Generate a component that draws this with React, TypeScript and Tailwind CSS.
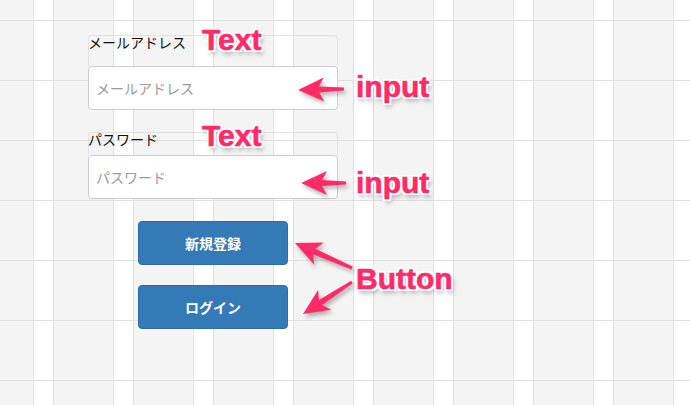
import React from "react";

type Pt = [number, number];

function dart(tail: Pt, tip: Pt, headLen = 26, headHalf = 12, neck = 3, tailHalf = 1.5): string {
  const dx = tail[0] - tip[0];
  const dy = tail[1] - tip[1];
  const len = Math.hypot(dx, dy);
  const ux = dx / len;
  const uy = dy / len;
  const nx = -uy;
  const ny = ux;
  const p = (a: number, b: number): string =>
    `${(tip[0] + ux * a + nx * b).toFixed(1)},${(tip[1] + uy * a + ny * b).toFixed(1)}`;
  return [
    p(0, 0),
    p(headLen, headHalf),
    p(headLen - 5, neck),
    p(len, tailHalf),
    p(len, -tailHalf),
    p(headLen - 5, -neck),
    p(headLen, -headHalf),
  ].join(" ");
}

const arrows: { tail: Pt; tip: Pt }[] = [
  { tail: [344, 89], tip: [298, 90] },
  { tail: [346, 183], tip: [301, 183] },
  { tail: [352, 268], tip: [295, 243] },
  { tail: [352, 282], tip: [303, 314] },
];

const annoCls =
  "absolute font-bold text-[30px] leading-[30px] text-[#ff2a68] [-webkit-text-stroke:0.6px_#ff2a68] [font-family:'Liberation_Sans',Arial,sans-serif] [text-shadow:-2px_-2px_0_#fff,2px_-2px_0_#fff,-2px_2px_0_#fff,2px_2px_0_#fff,0_2px_0_#fff,0_-2px_0_#fff,2px_0_0_#fff,-2px_0_0_#fff,2px_4px_5px_rgba(0,0,0,0.35)]";

export default function App() {
  return (
    <div className="relative w-[690px] h-[405px] overflow-hidden bg-[#f4f4f4] bg-[image:linear-gradient(to_bottom,#e0e0e0_1px,transparent_1px),linear-gradient(to_right,#e0e0e0_1px,#ffffff_1px,#ffffff_20px,#e0e0e0_20px,#e0e0e0_21px,#f4f4f4_21px)] bg-[length:100%_60px,80px_100%] bg-[position:0_20px,33px_0] [font-family:'Noto_Sans_CJK_JP',sans-serif]">
      <div className="flex flex-col pt-[35px] pl-[88px]">
        <div className="w-[250px] h-[31px] border border-b-0 border-[#e2e2e2] rounded-t-[4px]">
          <span className="block -mx-px -mt-[2px] text-[14px] leading-[16px] text-[#111]">メールアドレス</span>
        </div>
        <input
          className="w-[250px] h-[44px] border border-[#cccccc] rounded-[4px] bg-white pl-[7px] text-[14px] text-[#555] placeholder:text-[#9a9a9a] outline-none"
          placeholder="メールアドレス"
        />
        <div className="mt-[22px] w-[250px] h-[23px] border border-b-0 border-[#e2e2e2] rounded-t-[4px]">
          <span className="block -mx-px -mt-[2px] text-[14px] leading-[16px] text-[#111]">パスワード</span>
        </div>
        <input
          type="text"
          className="w-[250px] h-[44px] border border-[#cccccc] rounded-[4px] bg-white pl-[7px] text-[14px] text-[#555] placeholder:text-[#9a9a9a] outline-none"
          placeholder="パスワード"
        />
        <div className="flex flex-col gap-[20px] mt-[22px] ml-[50px]">
          <button className="w-[150px] h-[44px] rounded-[4px] bg-[#337ab7] border border-[#2e6da4] text-white font-bold text-[14px]">
            新規登録
          </button>
          <button className="w-[150px] h-[44px] rounded-[4px] bg-[#337ab7] border border-[#2e6da4] text-white font-bold text-[14px]">
            ログイン
          </button>
        </div>
      </div>

      <svg
        className="absolute left-0 top-0 drop-shadow-[2px_3px_2px_rgba(0,0,0,0.3)]"
        width="690"
        height="405"
        viewBox="0 0 690 405"
      >
        {arrows.map((a, i) => (
          <polygon key={i} points={dart(a.tail, a.tip)} fill="#ff2a68" />
        ))}
      </svg>

      <div className={`${annoCls} left-[202px] top-[25px]`}>Text</div>
      <div className={`${annoCls} left-[356px] top-[72px]`}>input</div>
      <div className={`${annoCls} left-[202px] top-[121px]`}>Text</div>
      <div className={`${annoCls} left-[356px] top-[168px]`}>input</div>
      <div className={`${annoCls} left-[356px] top-[264px]`}>Button</div>
    </div>
  );
}
